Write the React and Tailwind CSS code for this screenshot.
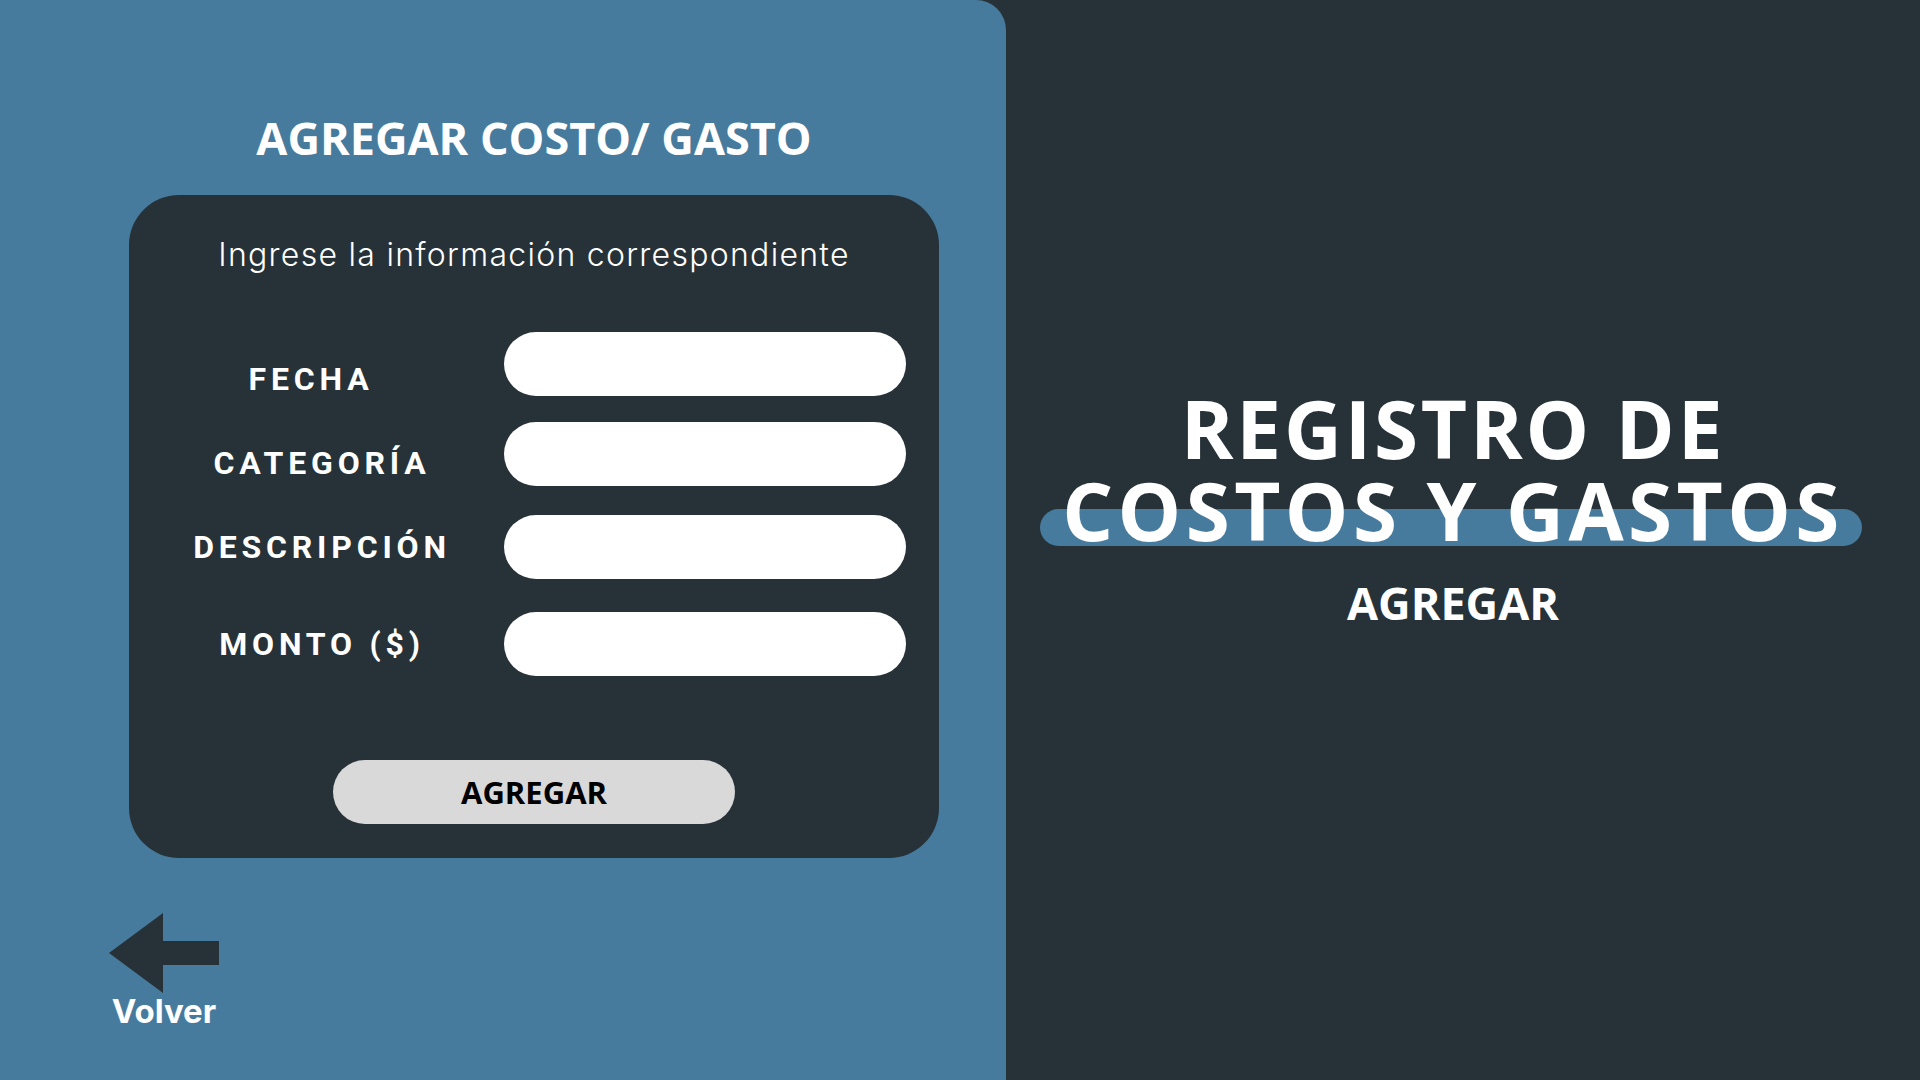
const fields = [
  { label: "FECHA", labelPad: "pt-[30px] pr-[22px]", gap: "mt-0" },
  { label: "CATEGORÍA", labelPad: "pt-[18px]", gap: "mt-[26px]" },
  { label: "DESCRIPCIÓN", labelPad: "pt-[0px]", gap: "mt-[29px]" },
  { label: "MONTO ($)", labelPad: "pt-[0px]", gap: "mt-[33px]" },
];

function Field({ label, labelPad, gap }) {
  return (
    <div className={`flex items-start ${gap}`}>
      <div className={`ml-[42px] w-[302px] h-[64px] flex items-center justify-center ${labelPad}`}>
        <span
          className="text-white text-[32px] font-bold tracking-[0.15em] leading-none"
          style={{ fontFamily: "Roboto, sans-serif" }}
        >
          {label}
        </span>
      </div>
      <div className="ml-[31px] w-[402px] h-[64px] rounded-full bg-white" />
    </div>
  );
}

export default function App() {
  return (
    <div
      className="flex w-full h-screen overflow-hidden bg-[#263238]"
      style={{ fontFamily: '"Open Sans", "Liberation Sans", sans-serif' }}
    >
      {/* left: form */}
      <div className="w-[1006px] h-full bg-[#467b9d] rounded-tr-[30px] flex flex-col">
        <div className="ml-[129px] w-[810px] mt-[115px] text-center text-white font-bold text-[45px] leading-none">
          AGREGAR COSTO/ GASTO
        </div>

        <div className="ml-[129px] mt-[35px] w-[810px] h-[663px] rounded-[50px] bg-[#263238] flex flex-col">
          <p
            className="mt-[42px] text-center text-white text-[32px] tracking-[0.04em] font-light leading-[36px]"
            style={{ fontFamily: "Inter, Lato, sans-serif" }}
          >
            Ingrese la información correspondiente
          </p>

          <div className="mt-[59px] flex flex-col">
            {fields.map((f) => (
              <Field key={f.label} {...f} />
            ))}
          </div>

          <button className="mt-[84px] mx-auto w-[402px] h-[64px] rounded-full bg-[#d9d9d9] text-black font-bold text-[31px] leading-none">
            AGREGAR
          </button>
        </div>

        <div className="ml-[109px] mt-[55px] w-[110px] flex flex-col items-center">
          <svg width="110" height="80" viewBox="0 0 110 80">
            <polygon points="0,40 54,0 54,28 110,28 110,52 54,52 54,80" fill="#263238" />
          </svg>
          <span
            className="mt-[2px] text-white font-bold text-[33px] leading-none"
            style={{ fontFamily: "Inter, Lato, sans-serif" }}
          >
            Volver
          </span>
        </div>
      </div>

      {/* right: heading */}
      <div className="flex-1 h-full flex flex-col items-center pt-[387px] pr-[20px]">
        <div className="text-white font-bold text-[80px] leading-[82px] tracking-[0.035em] text-center">
          REGISTRO DE
        </div>
        <div className="relative text-white font-bold text-[80px] leading-[82px] tracking-[0.055em] text-center">
          <span className="absolute left-[-22px] right-[-18px] top-[40px] h-[37px] rounded-full bg-[#467b9d]" />
          <span className="relative">COSTOS Y GASTOS</span>
        </div>
        <div className="mt-[29px] text-white font-bold text-[45px] leading-none">
          AGREGAR
        </div>
      </div>
    </div>
  );
}
